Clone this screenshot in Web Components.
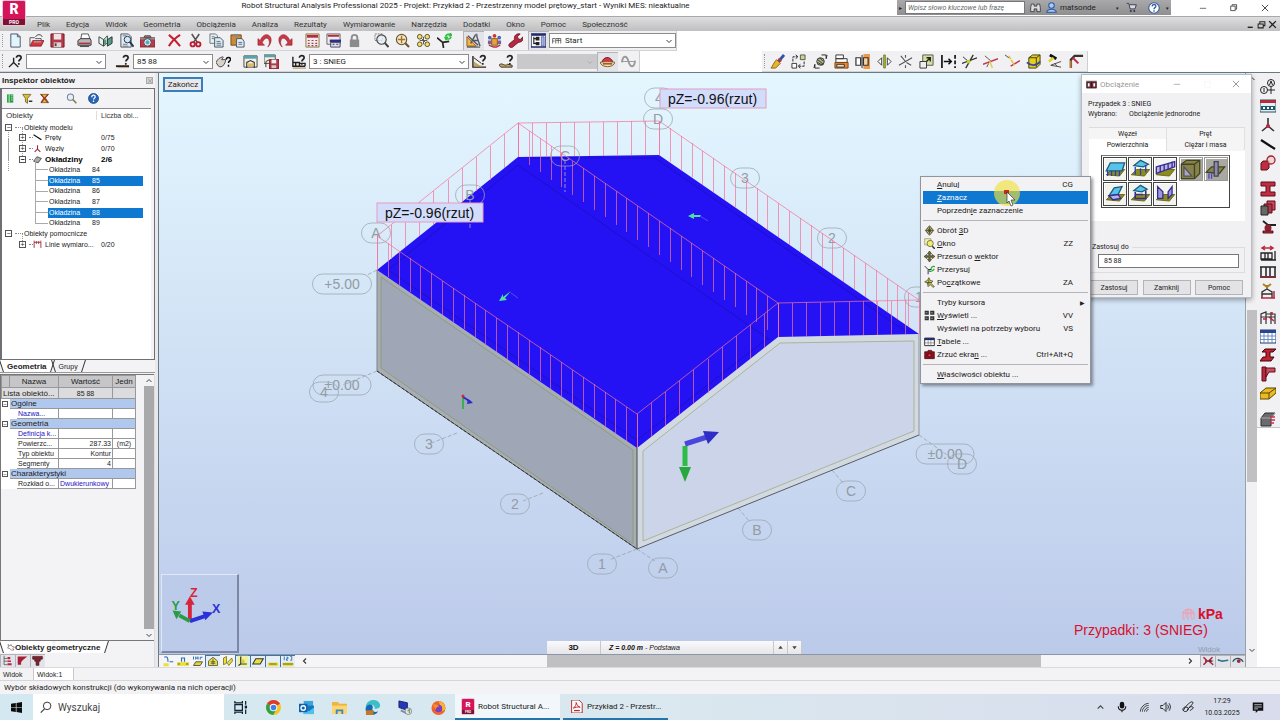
<!DOCTYPE html>
<html lang="pl">
<head>
<meta charset="utf-8">
<title>Robot Structural Analysis Professional 2025</title>
<style>
  html, body { margin: 0; height: 100%; }
  body { font-family: Roboto, "Noto Sans", sans-serif; font-size: 8px; color: #1c1c1c; background: #fff; overflow: hidden; }
</style>
</head>
<body>
<robot-app></robot-app>

<script>
/* ---------- icon set: [label, drawing on a 16 x 16 grid] ---------- */
const q = '<path d="M9 4c0-3 5-3 5 0 0 2-2.400 1.800-2.400 4M11.500 9.500v2" fill="none" stroke="#222" stroke-width="1.800"/>';
const ground = '<path d="M1 12l4-4h10l-4 5z" fill="#8c8c1c" stroke="#55550c" stroke-width=".6"/>';
const ICONS = {
  new: ['Nowy', '<path d="M3 1h7l3 3v11H3z" fill="#e3f4fb" stroke="#456" /><path d="M10 1v3h3" fill="none" stroke="#456"/>'],
  open: ['Otwórz', '<path d="M1 14V5h5l1 1h6v2" fill="#f3f3f3" stroke="#555"/><path d="M1 14l3-6h12l-3 6z" fill="#d8343c" stroke="#7a1520" stroke-width=".7"/><path d="M7 4c2-3 6-3 7 0" fill="none" stroke="#333"/><path d="M5 9.500h8" stroke="#8bd0ee"/>'],
  save: ['Zapisz', '<path d="M1 1h14v14H1z" fill="#b5394a" stroke="#6f1c28"/><path d="M4 1h8v6H4z" fill="#f0e4e6"/><path d="M4 10h8v5H4z" fill="#d8d8d8"/><path d="M5 11h2v3H5z" fill="#444"/>'],
  print: ['Drukuj', '<path d="M5 1h7l2 6H4z" fill="#fff" stroke="#555"/><path d="M1 8l3-2h10l1 2v5H1z" fill="#b6b6ba" stroke="#333"/><path d="M2 11h12" stroke="#c02b3a" stroke-width="1.500"/><path d="M3 13h10v2H3z" fill="#555"/>'],
  book: ['Układ wydruku', '<path d="M1 4l5 3v7l-5-3zM6 7l4-4v7l-4 4z" fill="#e8f2ea" stroke="#344"/><path d="M10 7l5-3v7l-5 3z" fill="#5d9b8c" stroke="#233"/><path d="M7.500 7v5" stroke="#2f7e4a" stroke-width="1.500"/>'],
  preview: ['Podgląd wydruku', '<path d="M2 1h8l3 3v11H2z" fill="#e6edf2" stroke="#456"/><path d="M4 12h5M4 14h6M4 3h4" stroke="#778"/><circle cx="9" cy="7" r="3.500" fill="#cfe9f5" stroke="#234"/><path d="M11.500 9.500l4 5" stroke="#234" stroke-width="2"/>'],
  camera: ['Zrzut ekranu', '<path d="M5 3h6l1 2H4z" fill="#888" stroke="#444"/><path d="M0 5h16v10H0z" fill="#ba3a48" stroke="#701a26" stroke-width=".7"/><path d="M0 5h16v2H0z" fill="#8a8a90"/><circle cx="8" cy="10" r="4" fill="#eee" stroke="#444"/><circle cx="8" cy="10" r="2.200" fill="#56a9c9"/>'],
  del: ['Usuń', '<path d="M2 2c4 3 8 7 12 12M14 2C9 5 5 9 2 14" fill="none" stroke="#c41f30" stroke-width="2.200"/>'],
  cut: ['Wytnij', '<path d="M4 1l6 9M12 1L6 10" stroke="#555" stroke-width="1.700"/><circle cx="5" cy="12" r="2.300" fill="none" stroke="#b81d33" stroke-width="2"/><circle cx="11" cy="12" r="2.300" fill="none" stroke="#b81d33" stroke-width="2"/>'],
  copy: ['Kopiuj', '<path d="M1 1h6l2 2v8H1z" fill="#e8eef2" stroke="#677"/><path d="M6 5h6l3 3v7H6z" fill="#dcebf2" stroke="#456"/><path d="M8 9h4M8 11h5M8 13h5M3 4h3M3 6h3" stroke="#567" stroke-width=".9"/>'],
  paste: ['Wklej', '<path d="M1 2h11v11H1z" fill="#c98a3c" stroke="#7a4c14"/><path d="M4 1h5v3H4z" fill="#888"/><path d="M7 6h6l2 3v6H7z" fill="#e4eef4" stroke="#456"/><path d="M9 10h4M9 12h4" stroke="#567"/>'],
  undo: ['Cofnij', '<path d="M1 6v7h7l-2.500-2.500C7 6 11 4 12.500 7s.5 6-1 8C16 11 16.500 3.500 11.500 2 8 1 5 4 3.500 8z" fill="#c93a48" stroke="#8c1524" stroke-width=".6"/>'],
  redo: ['Ponów', '<path d="M15 6v7H8l2.500-2.500C9 6 5 4 3.500 7s-.5 6 1 8C0 11-.5 3.500 4.500 2 8 1 11 4 12.500 8z" fill="#c93a48" stroke="#8c1524" stroke-width=".6"/>'],
  calc: ['Obliczenia', '<path d="M1 1h14v14H1z" fill="#f2e9ea" stroke="#874"/><path d="M2 2h12v3H2z" fill="#b52c3d"/><path d="M3 8h2M7 8h2M11 8h2M3 11h2M7 11h2M11 11h2M3 13.500h2M7 13.500h2M11 13.500h2" stroke="#a04450" stroke-width="1.300"/>'],
  calc2: ['Parametry obliczeń', '<path d="M1 1h14v11H1z" fill="#f2e9ea" stroke="#666"/><path d="M2 2h12v2H2z" fill="#b52c3d"/><path d="M4 7h12v3H4z" fill="#2b2c8c"/><path d="M5 10h10v5H5z" fill="#dedeee" stroke="#446"/><path d="M7 12h2M11 12h2" stroke="#333"/>'],
  lock: ['Blokada wyników', '<path d="M5 8V5c0-4 6-4 6 0v3" fill="none" stroke="#8c8c8c" stroke-width="2"/><path d="M3 7h10v8H3z" fill="#8b8b8d"/>'],
  zoomwin: ['Powiększ okno', '<path d="M1 1h8v7H1z" fill="none" stroke="#777" stroke-dasharray="2 1"/><circle cx="8" cy="7" r="5" fill="#e6eef3" fill-opacity=".8" stroke="#444" stroke-width="1.200"/><path d="M11.500 10.500l4 4.500" stroke="#444" stroke-width="2.200"/>'],
  zoomall: ['Powiększ wszystko', '<circle cx="7" cy="7" r="5.500" fill="#f5e9c8" stroke="#6b5634" stroke-width="1.200"/><path d="M7 3v8M3 7h8" stroke="#a0752c" stroke-width="1.500"/><path d="M11 11l4 4" stroke="#6b5634" stroke-width="2.200"/>'],
  views: ['Widoki', '<g fill="#f1dc7a" stroke="#5a4c1c"><circle cx="4" cy="4" r="2.500"/><circle cx="12" cy="4" r="2.500"/><circle cx="4" cy="12" r="2.500"/><circle cx="12" cy="12" r="2.500"/></g><path d="M8 4v8M4 8h8M6 6l4 4" stroke="#554" stroke-width="1"/>'],
  redraw: ['Przerysuj', '<path d="M0 5l6 5 1 6M6 10l7-1" fill="none" stroke="#222" stroke-width="1.800"/><path d="M9 4c1-3 4-3 6-2M15 4c-1 3-4 3-6 1M14 0l1.500 2.500-3 .5M10 7.500L8.800 5l3-.5" fill="none" stroke="#2fc040" stroke-width="1.800"/>'],
  geom: ['Geometria', '<path d="M1 14V4l10 10z" fill="#f0b645" stroke="#8f5f10"/><path d="M10 2L5 11M11 2l4 12M7 8h6M2 3l11 10" fill="none" stroke="#556" stroke-width="1.500"/><circle cx="11" cy="2" r="1.600" fill="#778"/><path d="M1 15h14" stroke="#333"/>'],
  people: ['Zespół', '<circle cx="8" cy="3" r="2" fill="#c33"/><circle cx="3" cy="5" r="2" fill="#496ab4"/><circle cx="13" cy="5" r="2" fill="#496ab4"/><path d="M1 8h4v4H1zM11 8h4v4h-4z" fill="#7e5ca8"/><path d="M5 6h6v7H5z" fill="#e9a23b" stroke="#8b5a18"/><path d="M2 13l5 2h3l4-2" fill="none" stroke="#b03048" stroke-width="1.500"/>'],
  wrench: ['Preferencje', '<path d="M2 15c-2-1-1-3 0-4l5-4C6 3 9 0 13 1L10 4l1 2 2 1 3-3c1 4-2 6-5 6l-6 5c-1 1-2 1-3 0z" fill="#b8283e" stroke="#5d0f1e" stroke-width=".8"/>'],
  tree: ['Inspektor', '<path d="M0 1h16v14H0z" fill="#fff" stroke="#232a6a" stroke-width="1.500"/><path d="M1 1h14v2H1z" fill="#232a6a"/><path d="M3 4v8M3 6h3M3 11h3" stroke="#222" stroke-width="1.200"/><path d="M5 4h4v4H5zM5 9.500h4v3.500H5z" fill="#232323"/><path d="M11 4h3v10h-3z" fill="#a8b6e4" stroke="#3a4690" stroke-width=".7"/>'],
  nodeq: ['Wybór węzłów', '<path d="M6 4v5L1 14M6 9l5 5" fill="none" stroke="#222" stroke-width="1.500"/>' + q],
  barq: ['Wybór prętów', '<path d="M1 13h14" stroke="#222" stroke-width="2"/><path d="M3 14.500h12" stroke="#c7a770"/>' + q],
  handq: ['Wybór obiektów', '<path d="M0 9c2-4 4-5 7-6 1 0 1 1 0 1.500L6 6l4 0c1 1-1 5-3 7-2 1-4 1-5-1z" fill="#d9d2c8" stroke="#444"/><path d="M11 6c0-3 4.500-3 4.500 0 0 1.500-2.200 1.300-2.200 3.500M13.300 11.500v2" fill="none" stroke="#111" stroke-width="1.600"/>'],
  win: ['Okno', '<path d="M1 2h14v12H1z" fill="#f5f0e0" stroke="#444"/><path d="M1 2h14v3H1z" fill="#53a3b0"/><path d="M4 15V9l4-2 4 2v6" fill="none" stroke="#333" stroke-width="1.200"/><path d="M5 10h6v3H5z" fill="#e4bb5a"/>'],
  winsave: ['Zapisz okno', '<path d="M0 1h12v9H0z" fill="#f5f0e0" stroke="#444"/><path d="M0 1h12v2.500H0z" fill="#53a3b0"/><path d="M2 14v-6l4-2" fill="none" stroke="#333"/><path d="M6 6h10v10H6z" fill="#b5394a" stroke="#6f1c28"/><path d="M8 6h5v4H8z" fill="#eee"/><path d="M8 12h5v3H8z" fill="#ccc"/>'],
  caseq: ['Wybór przypadku', '<path d="M2 3v10h13M2 9h7v4M5 9v4M9 10h6v3" fill="none" stroke="#222" stroke-width="1.500"/><path d="M2 15h14" stroke="#b08040"/>' + q],
  modeq: ['Postać', '<path d="M2 4l8 6" stroke="#222"/><path d="M1 2v12h14" fill="none" stroke="#222" stroke-width="1.500"/><path d="M2 13V8l6 4 6 1z" fill="#c7a357"/>' + q],
  shapeq: ['Kształt', '<path d="M0 12c3-4 6 2 9-1l5 1v2H2z" fill="#caa75e" stroke="#333"/>' + q],
  hill: ['Mapy', '<path d="M2 9c1-6 9-8 12 0z" fill="#d33445" stroke="#7d1521"/><path d="M0 9c2 6 14 6 16 0-3-1-13-1-16 0z" fill="#f1e9a0" stroke="#6d6320"/><path d="M3 10.500h10" stroke="#b52c3d" stroke-width="1.500"/>'],
  sine: ['Wykresy', '<path d="M1 8h14" stroke="#999"/><path d="M1 9C2 1 6 1 8 8s6 7 7-1" fill="none" stroke="#999" stroke-width="2"/>'],
  brush: ['Formatowanie', '<path d="M15 1l-6 7" stroke="#2b56a8" stroke-width="3"/><path d="M7 6l4 4-5 5H1c2-2 3-6 6-9z" fill="#e8b62c" stroke="#8c5f10"/><path d="M9 5l3 3" stroke="#bf3344" stroke-width="2"/>'],
  move: ['Przesuń', '<path d="M10 1h5v5h-5z" fill="#c8d48a" stroke="#555"/><path d="M1 10h5v5H1z" fill="#fff" stroke="#333"/><path d="M2 8V3h5M14 8v5H8M5 1l2.500 2L5 5M10 11l-2.500 2 2.500 2" fill="none" stroke="#222" stroke-dasharray="3 1"/>'],
  rotate: ['Obróć', '<circle cx="8" cy="8" r="4" fill="#b1b98a" stroke="#333"/><path d="M5 6l6 5M5 9l5 3M7 4l4 4" stroke="#333"/><path d="M9 1h5v4M15 1l-1 4M7 15H2v-4M1 15l1-4" fill="none" stroke="#222"/>'],
  mirror: ['Lustro', '<path d="M2 1h8v4H2zM2 5h12v4H2z" fill="#fff" stroke="#333"/><path d="M1 9h14v6H1z" fill="#e58a35" stroke="#7a4313"/><path d="M3 11h8v3H3z" fill="#f7d9b0" stroke="#333"/>'],
  symv: ['Symetria pionowa', '<path d="M9 0h7v16H9z" fill="#ee9a4c"/><path d="M1 4h5v8H1z" fill="#fff" stroke="#333" stroke-width="1.300"/><path d="M9 4h5v8H9z" fill="#f7d2a0" stroke="#333" stroke-width="1.300"/><path d="M7.500 1v14" stroke="#222"/>'],
  symp: ['Symetria płaszczyzny', '<path d="M5 4v8L1 8zM11 4v8l4-4z" fill="#fff" stroke="#333"/><path d="M7 1h2v14H7z" fill="#9eb51f" stroke="#55630c" stroke-width=".6"/>'],
  axis: ['Symetria osiowa', '<path d="M1 12L15 4M3 2l5 6M9 9l5 3M8 1v3M8 12v3" stroke="#555" stroke-width="1.200"/>'],
  scale: ['Skaluj', '<path d="M4 1h11v11H4z" fill="#d4dfa0" stroke="#555"/><path d="M1 8h7v7H1z" fill="#eee" stroke="#333"/><path d="M8 8l4-4M8 4h4v4" stroke="#222" fill="none" stroke-width="1.500"/>'],
  divide: ['Podział', '<path d="M1 1v14" stroke="#111" stroke-width="1.800"/><path d="M15 1v14" stroke="#111" stroke-width="1.800" stroke-dasharray="4 2"/><path d="M3 8h8M8 5l3 3-3 3" fill="none" stroke="#111" stroke-width="1.600"/>'],
  inter: ['Przecięcie', '<path d="M0 10l16-6M4 15l8-14" stroke="#333" stroke-width="1.400"/><path d="M1 3l6 5" stroke="#333"/><circle cx="7" cy="8" r="2" fill="#c3d427"/>'],
  trim: ['Przytnij', '<path d="M0 11l16-6" stroke="#c4374a" stroke-width="1.600"/><path d="M7 7l3 8" stroke="#e0cc50" stroke-width="1.500"/><path d="M2 2l6 5" stroke="#555"/><path d="M4 14l2-4" stroke="#555"/>'],
  extend: ['Wydłuż', '<path d="M6 13l10-6" stroke="#c4374a" stroke-width="1.600"/><path d="M4 2l6 10" stroke="#dcc932" stroke-width="1.600" stroke-dasharray="4 1"/><path d="M0 1l4 3" stroke="#444"/>'],
  cube: ['Bryła', '<path d="M3 4l4-3h8v10l-4 4H3z" fill="#e3cf21" stroke="#413b0a"/><path d="M3 4h8v10M11 4l4-3" fill="none" stroke="#413b0a"/><path d="M1 9c4 4 10 4 14-1" fill="none" stroke="#3c45a0" stroke-width="2"/>'],
  pen: ['Edycja', '<path d="M3 1l7 4" stroke="#111" stroke-width="3"/><path d="M2 8l5-4" stroke="#e0d32a" stroke-width="2.500"/><path d="M4 12l11-4M4 12l11 2M8 10l3 3" stroke="#444" fill="none"/>'],
  corner: ['Naroże', '<path d="M2 15V6l4-4h9" fill="none" stroke="#333" stroke-width="2.500"/><path d="M2 15V7" stroke="#e08a30" stroke-width="1.500"/><path d="M4 4l6 6" stroke="#c4263a" stroke-width="2"/>'],
  axes: ['Osie konstrukcji', '<circle cx="11" cy="4" r="3.500" fill="none" stroke="#222"/><path d="M9.500 6L11 2l1.500 4M11 8v7M8 11h7" fill="none" stroke="#222"/><circle cx="4" cy="11" r="3.500" fill="none" stroke="#222"/><path d="M4 9v4" stroke="#222"/>'],
  levels: ['Kondygnacje', '<path d="M0 2h16v12H0z" fill="#dff3f4" stroke="#255"/><path d="M0 2h16v3H0z" fill="#b8283e"/><path d="M1 8h14v4H1z" fill="#24536c"/><path d="M3 10h2M7 10h2M11 10h2" stroke="#fff" stroke-width="2"/>'],
  node: ['Węzły', '<path d="M8 1v8L2 14M8 9l6 5" fill="none" stroke="#333" stroke-width="1.600"/><circle cx="8" cy="9" r="2" fill="#b8283e"/>'],
  bar: ['Pręty', '<path d="M1 4l14 9" stroke="#111" stroke-width="2.200"/>'],
  solid: ['Bryły', '<path d="M1 8l2-2h6v7l-2 2H1z" fill="#c02c40" stroke="#5c0f1c"/><circle cx="11" cy="5" r="4" fill="#ecc" fill-opacity=".7" stroke="#a3202f" stroke-width="1.300"/>'],
  section: ['Profile', '<path d="M1 1h14v4h-5v6h5v4H1v-4h5V5H1z" fill="#c02c40" stroke="#5c0f1c"/>'],
  panel: ['Grubości', '<path d="M7 1h8v9H7z" fill="#d14558" stroke="#5c0f1c"/><path d="M4 4h8v9H4z" fill="#b23647" stroke="#5c0f1c"/><path d="M1 6h7v9H1z" fill="#686868" stroke="#222"/>'],
  support: ['Podpory', '<path d="M3 2l5 4h8" fill="none" stroke="#222" stroke-width="1.800"/><circle cx="8" cy="9" r="3.500" fill="#8c2232"/><path d="M3 12h10v2H3z" fill="#c02c40" stroke="#5c0f1c"/>'],
  cases: ['Przypadki obciążeń', '<path d="M3 3h9M5 1L2 3l3 2M10 1l3 2-3 2" fill="none" stroke="#b8283e" stroke-width="1.500"/><path d="M1 8h11v6H1zM5 8v6M8 8v6M1 15h15M15 6v9" fill="none" stroke="#222" stroke-width="1.300"/>'],
  loads: ['Obciążenia', '<path d="M0 3h16M1 3v9M6 3v9M10 3v9M15 3v9M0 13h16" fill="none" stroke="#222" stroke-width="1.500"/><path d="M0 13h16" stroke="#8a2230" stroke-width="1.500"/>'],
  struct: ['Kombinacje', '<path d="M2 15V9l5-3 5 3v6M2 11h10M7 6V2" fill="none" stroke="#333" stroke-width="1.400"/><path d="M3 1l4 3 4-3" stroke="#b08520" fill="none" stroke-width="2"/><path d="M1 15h14M14 8v7" stroke="#b8283e" stroke-width="1.500"/>'],
  frame: ['Konstrukcje', '<path d="M1 15V5l5-2v12M6 5h9v10M11 3v12M1 8h14" fill="none" stroke="#333" stroke-width="1.200"/><path d="M3 10h4M9 8l5 4M12 3v3" stroke="#b8283e" stroke-width="1.500"/>'],
  table: ['Tabele', '<path d="M0 2h16v13H0z" fill="#fff" stroke="#223a6a"/><path d="M0 2h16v3H0z" fill="#27468e"/><path d="M0 8h16M0 11.500h16M4 5v10M8 5v10M12 5v10" stroke="#5f86c0" stroke-width=".9"/>'],
  steel: ['Wymiarowanie stali', '<path d="M2 5l3-3h11l-3 3h-3v5h4l-3 4H0l3-4h3V5z" fill="#c3212f" stroke="#3c060c"/>'],
  joint: ['Połączenia', '<path d="M2 1h4v14H2z" fill="#b8283e" stroke="#5c0f1c"/><path d="M6 2h9v4H9l-3 5z" fill="#cd5060" stroke="#5c0f1c"/>'],
  timber: ['Wymiarowanie drewna', '<path d="M0 8l6-5h10v5l-7 6H0z" fill="#e9bb22" stroke="#5d4405"/><path d="M0 8h9v6M9 8l7-5" fill="none" stroke="#5d4405"/>'],
  rc: ['Wymiarowanie żelbetu', '<path d="M1 7l4-5h10l-4 5v8H1z" fill="#6b6b6f" stroke="#2c2c2e"/><path d="M1 7h10l4-5" fill="none" stroke="#aaa"/><path d="M10 6h5M10 9h5M10 12h4" stroke="#c33249" stroke-width="1.500"/>'],
  list: ['Lista', '<path d="M3 2h9v12H3z" fill="#1f9e4c"/><path d="M6 2v12M9 4h2M9 7h2M9 10h2" stroke="#eaf6b8" stroke-width="1.300"/>'],
  funnel: ['Filtr', '<path d="M1 2h12l-5 6v7l-3-2V8z" fill="#dcbc39" stroke="#5c4c12"/><path d="M10 12h5" stroke="#222" stroke-width="2"/>'],
  funnel2: ['Usuń filtr', '<path d="M2 2h12L9 7l5 7H3l4-7z" fill="#dcbc39" stroke="#5c4c12"/><path d="M3 2l10 12M13 2L3 14" stroke="#a02624" stroke-width="1.500"/>'],
  lens: ['Szukaj', '<circle cx="6.500" cy="6" r="4.500" fill="#e5eff9" stroke="#77819a" stroke-width="1.500"/><path d="M10 9.500l5 5.500" stroke="#8c7a45" stroke-width="2.300"/>'],
  help: ['Pomoc', '<circle cx="8" cy="8" r="7.300" fill="#2766b8" stroke="#163d78"/><path d="M5.500 6c0-4 5-3.500 5-.5 0 2-2.500 2-2.500 4M8 11v2" fill="none" stroke="#fff" stroke-width="1.800"/>'],
  ld1: ['Obciążenie jednorodne', ground + '<path d="M1 9l3-6h11l-2 6z" fill="#55c4e8" stroke="#1d5a80"/><path d="M2 9v4M5 9v4M8 9v4M11 9v4" stroke="#2a3bb0"/>'],
  ld2: ['Obciążenie powierzchniowe', ground + '<path d="M3 5l5-4 6 3-4 2z" fill="#59c6ea" stroke="#1d5a80"/><path d="M4 6v6M8 7v5M12 5v5" stroke="#2a3bb0"/>'],
  ld3: ['Obciążenie liniowe', ground + '<path d="M1 6l14-4v4L1 11z" fill="#b9b2e8" stroke="#342c90"/><path d="M4 5v5M7 4v5M10 3v5M13 2v5" stroke="#342c90"/>'],
  ld4: ['Ciśnienie hydrostatyczne', '<path d="M1 4l4-3h10v10l-4 4H1z" fill="#86824e" stroke="#46441c"/><path d="M1 4h10v11M11 4l4-3" fill="none" stroke="#46441c"/><path d="M3 6v7h6z" fill="#aaa4c8" stroke="#555"/>'],
  ld5: ['Obciążenie skupione', '<path d="M1 10l4-4h10l-4 5z" fill="#86824e" stroke="#46441c"/><path d="M7 2h3v11H7z" fill="#8f8ca8" stroke="#44435c"/><path d="M3 11v4M5 11v4" stroke="#44c"/>'],
  ld6: ['Obciążenie konturowe', ground + '<path d="M3 9l4-6 6-1-3 6z" fill="#55c4e8" stroke="#1d5a80"/><path d="M3 9l3 3 6-1-2-3z" fill="#b9b2e8" stroke="#342c90"/>'],
  ld7: ['Obciążenie trójpunktowe', ground + '<path d="M3 5l5-4 5 3-4 2z" fill="#59c6ea" stroke="#1d5a80"/><path d="M4 6v5h8V5M4 8h6" fill="none" stroke="#342c90" stroke-width="1.200"/>'],
  ld8: ['Obciążenie krawędzi', ground + '<path d="M2 2l4 4v5H2zM10 6l3-4v6l-3 3z" fill="#9f97e0" stroke="#342c90"/>'],
  s1: ['Numery węzłów', '<path d="M2 13h7" stroke="#e9e040" stroke-width="4"/><path d="M3 3c4-2 5 1 5 6M10 9h5" fill="none" stroke="#2a6db0" stroke-width="1.500"/>'],
  s2: ['Numery prętów', '<path d="M0 12h16" stroke="#e9e040" stroke-width="5"/><path d="M6 9V4h4v5" fill="none" stroke="#2a6db0" stroke-width="1.500"/><path d="M1 12h3M12 12h3" stroke="#333"/>'],
  s3: ['Numery paneli', '<path d="M2 14l3-5h9l-3 5z" fill="#e0d43c" stroke="#333"/><path d="M2 2v4M5 2v4M5 4h3M8 2v4M11 6V3h3" fill="none" stroke="#2a6db0" stroke-width="1.300"/>'],
  s4: ['Podpory', '<path d="M8 3l6 5v6H2V8z" fill="#e9e040" stroke="#444"/><path d="M5 9h6M5 11h6M8 5v8" stroke="#444"/>'],
  s5: ['Profile', '<path d="M2 4l4-2v9l-4 2zM7 10l6-6 1 4-5 6z" fill="#e9e040" stroke="#6b6415"/>'],
  s6: ['Układy lokalne', '<path d="M1 1h14v14H1z" fill="#eef2a0"/><path d="M5 2v10h8M5 12l-3 2" fill="none" stroke="#333" stroke-width="1.600"/><path d="M6 6h4v5H6z" fill="#d8cc3a"/>'],
  s7: ['Panele', '<path d="M1 12l4-7h10l-4 7z" fill="#e9e040" stroke="#333" stroke-width="1.400"/>'],
  s8: ['Pręty', '<path d="M1 10h14v5H1z" fill="#e9e040"/><path d="M3 12h10" stroke="#333"/>'],
  s9: ['Wartości', '<path d="M1 10h14v5H1z" fill="#e9e040"/><path d="M3 2v5M6 3h2v2H6v2h2M11 2h2v5h-2" fill="none" stroke="#2a6db0" stroke-width="1.200"/><path d="M1 12h14" stroke="#333"/>'],
  v1: ['Atrybuty', '<path d="M2 3l5 5-5 5M14 3L9 8l6 5M4 8h9" fill="none" stroke="#a4263a" stroke-width="2"/><path d="M9 8h6" stroke="#222"/>'],
  v2: ['Przekrój', '<path d="M1 7c3-1 4 2 7 1l7-1" fill="none" stroke="#2f6e8c" stroke-width="2"/>'],
  v3: ['Widok', '<path d="M1 9c3-6 10-6 14 0" fill="#aee" stroke="#345" stroke-width="1.500"/><circle cx="9" cy="8" r="2.500" fill="#a4263a"/>'],
  p1: ['Drzewo', '<path d="M3 1v13h5M3 5h5M3 9h5" fill="none" stroke="#444"/><path d="M8 3h4v3H8zM8 8h5v2H8zM8 12h6v3H8z" fill="#b8283e"/>'],
  p2: ['Połączenie', '<path d="M1 2h14L9 7l-3 3v4H1z" fill="#a81f33"/>'],
  p3: ['Profil', '<path d="M1 2h14v4h-3v3h-2v6H6V9H4V6H1z" fill="#7b2430" stroke="#4a1018"/>'],
  m3d: ['', '<path d="M8 1l6 7-6 7-6-7z" fill="#b9b15a" stroke="#222"/><path d="M8 3v10M3 8h10M5 5l6 6M11 5l-6 6" stroke="#333"/>'],
  mwin: ['', '<path d="M1 1h9v9H1z" fill="#f8f4a0" stroke="#888"/><circle cx="9" cy="8" r="4.500" fill="#f1f066" stroke="#444"/><path d="M12 12l4 4" stroke="#333" stroke-width="2"/>'],
  mpan: ['', '<path d="M8 0l3 4H9v3h3V5l4 3-4 3V9H9v3h2l-3 4-3-4h2V9H4v2L0 8l4-3v2h3V4H5z" fill="#77722a" stroke="#222" stroke-width=".8"/>'],
  mred: ['', '<path d="M1 3l5 5v7M6 8h5" fill="none" stroke="#222" stroke-width="1.300"/><path d="M10 7c1-3 3-4 6-3M7 10c4 2 6 0 8-3" fill="none" stroke="#2aa33c" stroke-width="1.800"/>'],
  mini: ['', '<path d="M7 1l2 4 4 1-3 3 5 5-2 1-4-4-3 3-1-5-4-2 4-2z" fill="#d9ce3d" stroke="#333"/><path d="M7 4v7M4 8h7" stroke="#333"/>'],
  mdisp: ['', '<path d="M1 1h6v6H1zM9 1h6v6H9zM1 9h6v6H1zM9 9h6v6H9z" fill="#333"/><path d="M2 4h3M10 4h3M2 12h3M10 12h3" stroke="#bbb"/>'],
  mtab: ['', '<path d="M1 3h14v11H1z" fill="#fff" stroke="#222" stroke-width="1.300"/><path d="M1 3h14v3H1z" fill="#232a6a"/><path d="M6 6v8M10 6v8M1 10h14" stroke="#555" stroke-width=".8"/>'],
  mcam: ['', '<path d="M1 4h4l1-2h5l1 2h3v10H1z" fill="#8c1220" stroke="#3c060c"/><circle cx="8" cy="9" r="2.500" fill="#e4364a" stroke="#300"/>'],
  tbar: ['', '<path d="M1 3l14 9" stroke="#111" stroke-width="2.200"/>'],
  tnode: ['', '<path d="M8 2v7l-5 5M8 9l5 5" fill="none" stroke="#a22638" stroke-width="2"/>'],
  tclad: ['', '<path d="M1 11l6-8 8 3-6 8z" fill="#aaa" stroke="#333" stroke-width="1.300"/>'],
  tdim: ['', '<path d="M2 14V4h12v10" fill="none" stroke="#a22638" stroke-width="1.600"/><path d="M6 2v5M10 2v5M2 1v3M14 1v3" stroke="#a22638" stroke-width="1.400"/>'],
  case: ['', '<path d="M0 2h16v12H0z" fill="#c8c8cc"/><path d="M1 4h14v9H1z" fill="#7b2430" stroke="#222"/><path d="M4 6v5M12 6v5" stroke="#fff" stroke-width="2.500"/><path d="M8 4v9" stroke="#222" stroke-width="1.500"/>'],
  start: ['', '<path d="M1 12V4h4M1 8h3M6 12V4h8v8M10 4v8M6 7h8" fill="none" stroke="#444" stroke-width="1.200"/>'],
  bino: ['Szukaj', '<path d="M2 3h4v3h4V3h4l1 5v6h-5v-4H6v4H1V8z" fill="#ddd" stroke="#333" stroke-width="1.200"/>'],
  user: ['Konto', '<circle cx="8" cy="5" r="4" fill="#a9cdf2" stroke="#2b56a8" stroke-width="1.500"/><path d="M1 15c1-6 13-6 14 0z" fill="#a9cdf2" stroke="#2b56a8" stroke-width="1.500"/>'],
  cart: ['Sklep', '<path d="M1 2h3l2 8h7l2-6H5" fill="#d7dbe6" stroke="#334" stroke-width="1.300"/><circle cx="7" cy="13" r="1.500" fill="#334"/><circle cx="12" cy="13" r="1.500" fill="#334"/>'],
  qm: ['Pomoc', '<circle cx="8" cy="8" r="7" fill="#fff" stroke="#345e9c" stroke-width="1.500"/><path d="M5.500 6c0-3.500 5-3.500 5-.5 0 2-2.500 2-2.500 4M8 11v2" fill="none" stroke="#345e9c" stroke-width="1.800"/>'],
  min: ['Minimalizuj', '<path d="M3 8.500h10" stroke="#222"/>'],
  max: ['Przywróć', '<path d="M3 5.500h8v8H3zM5.500 5V3h8v8h-2" fill="none" stroke="#222" stroke-width="1.300"/>'],
  box: ['Maksymalizuj', '<path d="M3 3h10v10H3z" fill="none" stroke="#f0f0f0"/>'],
  close: ['Zamknij', '<path d="M3 3l10 10M13 3L3 13" stroke="#222" stroke-width="1.300"/>'],
  closeg: ['Zamknij', '<path d="M3 3l10 10M13 3L3 13" stroke="#777" stroke-width="1.200"/>'],
  ming: ['Minimalizuj', '<path d="M3 8.500h10" stroke="#888"/>'],
  mdimin: ['Minimalizuj dokument', '<path d="M3 13h9" stroke="#222" stroke-width="2.500"/>'],
  mdimax: ['Przywróć dokument', '<path d="M2 7h9v7H2zM5 7V3h9v7h-3" fill="none" stroke="#222" stroke-width="1.800"/>'],
  mdiclose: ['Zamknij dokument', '<path d="M2 2l12 12M14 2L2 14" stroke="#222" stroke-width="2.500"/>'],
  up: ['W górę', '<path d="M3 10l5-5 5 5" fill="none" stroke="#444" stroke-width="2"/>'],
  down: ['W dół', '<path d="M3 6l5 5 5-5" fill="none" stroke="#444" stroke-width="2"/>'],
  left: ['W lewo', '<path d="M10 3L5 8l5 5" fill="none" stroke="#333" stroke-width="2.200"/>'],
  right: ['W prawo', '<path d="M6 3l5 5-5 5" fill="none" stroke="#333" stroke-width="2.200"/>'],
  tup: ['Wyżej', '<path d="M3 11h10L8 4z" fill="#444"/>'],
  tdown: ['Niżej', '<path d="M3 5h10l-5 7z" fill="#444"/>'],
  winlogo: ['Start', '<path d="M0 2.500l7-1v6H0zM8 1.300L16 0v7.500H8zM0 8.500h7v6l-7-1zM8 8.500h8V16l-8-1.300z" fill="#0b0b0c"/>'],
  taskview: ['Widok zadań', '<path d="M2 1v2h8V1M2 15v-2h8v2M2 5h8v6H2z" fill="none" stroke="#123" stroke-width="1.300"/><path d="M13.500 1v4M13.500 10v5" stroke="#123" stroke-width="1.300"/><path d="M12.500 6h2.500v3h-2.500z" fill="#123"/>'],
  chrome: ['Chrome', '<circle cx="8" cy="8" r="8" fill="#f6c324"/><path d="M8 8L1.100 4A8 8 0 0 1 14.900 4z" fill="#dc3a2b"/><path d="M8 8L1.100 4A8 8 0 0 0 7.600 16l3.500-6z" fill="#31a04d"/><circle cx="8" cy="8" r="4" fill="#fff"/><circle cx="8" cy="8" r="3" fill="#3f7fe6"/>'],
  outlook: ['Outlook', '<path d="M5 1h10v6H5z" fill="#39a5dc"/><path d="M5 6h11v9H5z" fill="#1476bd"/><path d="M5 8l5.500 4L16 8v7H5z" fill="#4fc0ef"/><path d="M0 4h9v9H0z" fill="#0f62ab"/><circle cx="4.500" cy="8.500" r="2.400" fill="none" stroke="#fff" stroke-width="1.400"/>'],
  folder: ['Eksplorator plików', '<path d="M0 2h6l2 2h8v11H0z" fill="#eeb63a"/><path d="M0 6h16v9H0z" fill="#fbd672"/><path d="M4 15v-5h8v5h-2v-3H6v3z" fill="#3b88c4"/>'],
  edge: ['Edge', '<path d="M1 9C0 3 5 0 9 0c5 0 8 4 7 7-1 2-4 3-6 2 1-2-1-4-3-4-3 0-5 2-6 4z" fill="#3cc0c8"/><path d="M1 8c2-5 9-4 7 1-1 3 3 5 6 3-2 4-7 5-10 3S0 11 1 8z" fill="#1767b4"/><path d="M1 11h8v5H1z" fill="#c17a2a"/>'],
  remote: ['Pulpit zdalny', '<path d="M1 1l9 2v8l-9-3z" fill="#2438b8" stroke="#18246c"/><path d="M3 11l6 3" stroke="#889" stroke-width="2"/><circle cx="11" cy="12" r="3.500" fill="#e5e8ee" stroke="#888"/><path d="M10 12l2-2v4" fill="none" stroke="#3a8a3a"/>'],
  firefox: ['Firefox', '<circle cx="8" cy="8.500" r="7.500" fill="#f0642a"/><path d="M8 1c4 1 8 4 7 9l-3 2z" fill="#fbb52c"/><circle cx="8" cy="9" r="4" fill="#7b3fc4"/><path d="M2 5c2-1 5 0 7 2-3 0-4 2-4 4" fill="#f98c2c"/>'],
  pdf: ['PDF', '<path d="M2 0h9l4 4v12H2z" fill="#fff" stroke="#b52a2a" stroke-width="1.200"/><path d="M4 10c3-2 4-5 3.500-7C9 7 10 8 12.500 9 9 8 7 9 4 10z" fill="none" stroke="#c8202c" stroke-width="1.200"/><path d="M5 13h7" stroke="#b52a2a" stroke-width="1.600"/>'],
  mic: ['Mikrofon', '<rect x="5" y="1" width="6" height="9" rx="3" fill="#111"/><path d="M3 7c0 7 10 7 10 0M8 12v3" fill="none" stroke="#111" stroke-width="1.400"/>'],
  net: ['Sieć', '<path d="M2 14C2 8 8 2 14 2M5 14c0-5 4-9 9-9M8 14c0-3 3-6 6-6M11 14c0-2 1-3 3-3" fill="none" stroke="#222" stroke-width="1.200"/>'],
  vol: ['Głośność', '<path d="M1 6h3l4-4v12l-4-4H1z" fill="none" stroke="#222" stroke-width="1.200"/><path d="M10 5c1.500 2 1.500 4 0 6M12 3c2.500 3 2.500 7 0 10" fill="none" stroke="#222" stroke-width="1.200"/>'],
  penw: ['Pióro', '<path d="M2 13c-2-2 0-5 3-5s4 2 3 4-5 3-6 1C3 8 10 2 13 1c2 0 2 2 0 4L7 12M9 9c2-2 6-2 6 0s-4 2-4 4" fill="none" stroke="#222" stroke-width="1.300"/>'],
  note: ['Powiadomienia', '<path d="M1 2h14v11H8l-3 3v-3H1z" fill="#111"/><path d="M3 5h10M3 8h10M3 10.500h5" stroke="#dde" stroke-width="1.100"/>'],
  search: ['', '<circle cx="9.500" cy="6.500" r="5" fill="none" stroke="#333" stroke-width="1.300"/><path d="M6 10.500l-5 5" stroke="#333" stroke-width="1.500"/>'],
  hand: ['', '<path d="M2 3l4 3 2-3 2 4 5 1-3 3 2 3-5 0-4-3-4-1 2-2z" fill="#fff" stroke="#333"/>']
};
const svg = (name, size = 14) =>
  `<svg width="${size}" height="${size}" viewBox="0 0 16 16" aria-hidden="true">${ICONS[name][1]}</svg>`;
const iconButton = (name, size, extra = '') =>
  `<button type="button" aria-label="${ICONS[name][0]}"${extra}>${svg(name, size)}</button>`;
const BASE = `<style>
  * { box-sizing: border-box; }
  svg { display: block; flex: none; }
  button { font: inherit; color: inherit; padding: 0; margin: 0; border: 0; background: none; display: flex; align-items: center; justify-content: center; flex: none; }
  select, input { font: inherit; color: inherit; margin: 0; }
</style>`;
/* Sheet tabs with slanted sides, shared by the two left panels */
const TAB_STYLE = `
  .sheet { position: relative; z-index: 0; height: 12px; padding: 0 6px; font-size: 8px; }
  .sheet::before, .sheet::after { content: ""; position: absolute; top: 0; bottom: 0; z-index: -1; }
  .sheet::before { left: 0; right: 50%; border-left: 1px solid #333; transform: skewX(18deg); }
  .sheet::after { left: 50%; right: 0; border-right: 1px solid #333; transform: skewX(-18deg); }
  .sel { font-weight: 700; } .sel::before, .sel::after { background: #fff; }`;
const define = (tag, render) => customElements.define(tag, class extends HTMLElement {
  constructor() { super(); this.attachShadow({ mode: 'open' }); }
  connectedCallback() { this.shadowRoot.innerHTML = BASE + render(this); }
});

/* Row or column of icon buttons: "|" is a group gap, "*" marks a pressed button */
define('tool-strip', el => {
  const size = +(el.getAttribute('size') || 15);
  const items = el.getAttribute('items').split(' ').map(t => {
    if (t === '|') return '<i></i>';
    const on = t.endsWith('*');
    return iconButton(on ? t.slice(0, -1) : t, size, on ? ' aria-pressed="true"' : '');
  }).join('');
  return `<style>
    :host { display: flex; align-items: center; }
    button { width: var(--cell, 21px); height: var(--cell-h, 19px); }
    button[aria-pressed] { background: var(--on, #e2e4ea); box-shadow: inset 1px 1px var(--on-edge, #b4b4b8); }
    i { flex: none; width: var(--gap, 6px); height: var(--gap, 6px); }
    :host([vertical]) { flex-direction: column; }
    :host([spread]) { justify-content: space-between; }
  </style>${items}`;
});

define('combo-box', el => {
  const off = el.hasAttribute('disabled');
  const icon = el.getAttribute('icon');
  return `<style>
    :host { display: flex; align-items: center; height: 15px; border: 1px solid #8c8c8e; background: #fff; position: relative; }
    :host([disabled]) { background: #c9c9cb; border-color: #c9c9cb; }
    select { appearance: none; border: 0; outline: 0; background: none; flex: 1; min-width: 0; height: 13px; padding: 0 12px 0 3px; }
    .chev { position: absolute; right: 2px; top: 3px; opacity: ${off ? .2 : 1}; }
    .lead { margin-left: 2px; }
  </style>${icon ? `<span class="lead">${svg(icon, 10)}</span>` : ''}
  <select aria-label="${el.getAttribute('label')}"${off ? ' disabled' : ''}><option>${el.getAttribute('value') || ''}</option></select>
  <span class="chev">${svg('down', 8)}</span>`;
});

define('app-logo', () => `<style>
    :host { display: flex; flex-direction: column; width: 22px; height: 24px; color: #fff; font-weight: 700; text-align: center; border-radius: 1px; overflow: hidden; background: #d6145a; box-shadow: 0 0 0 1px #e9c4d2; }
    :host([small]) { width: 12px; height: 15px; }
    b { flex: 1; font-size: 14px; line-height: 17px; }
    small { font-size: 5px; line-height: 6px; background: #7c1136; }
    :host([small]) b { font-size: 8px; line-height: 11px; }
    :host([small]) small { font-size: 3px; line-height: 4px; }
  </style><b>R</b><small>PRO</small>`);

define('title-bar', () => `<style>
    :host { display: flex; height: 16px; background: #fff; padding-left: 34px; align-items: stretch; }
    h1 { flex: 1; margin: 0; font-size: 8px; font-weight: 400; line-height: 12px; text-align: center; white-space: nowrap; }
    .info { display: flex; align-items: center; width: 274px; height: 15px; background: linear-gradient(#a9a9ab, #8f8f92); gap: 5px; }
    .info input { width: 120px; height: 13px; border: 1px solid #777; background: #fff; font-size: 7px; font-style: italic; padding: 0 2px; }
    .info input::placeholder { color: #666; opacity: 1; }
    .arrow { width: 6px; margin-right: -3px; font-size: 6px; color: #222; text-align: center; }
    .name { flex: 1; margin-left: -2px; color: #222; }
    .dd { font-size: 5px; } .dd:last-child { margin: 0 2px 0 1px; }
    .info [aria-label=Sklep] { margin: 0 6px 0 2px; }
    .win { display: flex; margin-left: 16px; }
    .win button { width: 31px; height: 15px; }
  </style>
  <h1>Robot Structural Analysis Professional 2025 - Projekt: Przykład 2 - Przestrzenny model prętowy_start - Wyniki MES: nieaktualne</h1>
  <div class="info"><span class="arrow">▸</span><input aria-label="Wyszukiwanie" placeholder="Wpisz słowo kluczowe lub frazę">
    ${iconButton('bino', 11)}${iconButton('user', 11)}<span class="name">matsonde</span><span class="dd">▾</span>${iconButton('cart', 11)}${iconButton('qm', 12)}<span class="dd">▾</span></div>
  <div class="win">${iconButton('min', 10)}${iconButton('max', 9)}${iconButton('close', 10)}</div>`);

define('menu-bar', () => `<style>
    :host { display: flex; align-items: center; height: 15px; background: linear-gradient(#dededf, #bfbfc1); border-top: 1px solid #a9a9ab; padding-left: 29px; color: #333; }
    nav { display: flex; flex: 1; }
    nav button { padding: 0 8px; line-height: 13px; }
    .doc { display: flex; gap: 2px; padding-right: 3px; }
  </style><nav>${['Plik', 'Edycja', 'Widok', 'Geometria', 'Obciążenia', 'Analiza', 'Rezultaty', 'Wymiarowanie', 'Narzędzia', 'Dodatki', 'Okno', 'Pomoc', 'Społeczność'].map(t => `<button type="button">${t}</button>`).join('')}</nav>
  <div class="doc">${iconButton('mdimin', 9)}${iconButton('mdimax', 9)}${iconButton('mdiclose', 9)}</div>`);

define('main-toolbar', () => `<style>
    :host { display: block; background: #fff; border-bottom: 1px solid #6d7880; }
    .row { display: flex; justify-content: space-between; height: 20px; }
    .row + .row { height: 21px; }
    .bar { display: flex; align-items: center; background: #f1f0f2; border-bottom: 1px solid #d3d3d5; border-right: 1px solid #cfcfd2; padding-left: 5px; position: relative; }
    .bar::before { content: ""; position: absolute; left: 2px; top: 3px; bottom: 3px; border-left: 1px dotted #999; }
    .three { width: 326px; margin-right: 192px; }
    .three tool-strip { flex: 1; }
    .tail { margin-left: 2px; }
    .w1 { width: 80px; } .w2 { width: 160px; } .w3 { width: 127px; }
    .gap { margin-left: 6px; }
  </style>
  <div class="row"><div class="bar">
    <tool-strip items="new open save | print book preview camera | del cut copy paste | undo redo | calc calc2 lock | zoomwin zoomall views redraw"></tool-strip>
    <tool-strip class="gap tail2" style="margin-left:8px" items="geom* people wrench"></tool-strip>
    <tool-strip class="tail" items="tree*"></tool-strip>
    <combo-box class="w3" icon="start" value="Start" label="Układ"></combo-box></div></div>
  <div class="row"><div class="bar">
    <tool-strip items="nodeq"></tool-strip><combo-box class="w1" label="Węzły"></combo-box>
    <tool-strip class="gap" items="barq"></tool-strip><combo-box class="w1" value="85 88" label="Obiekty"></combo-box>
    <tool-strip items="handq | win winsave | caseq"></tool-strip><combo-box class="w2" value="3 : SNIEG" label="Przypadek"></combo-box>
    <tool-strip items="modeq | shapeq"></tool-strip><combo-box class="w1" disabled label="Postać"></combo-box>
    <tool-strip items="hill* sine"></tool-strip></div>
   <div class="bar three"><tool-strip spread items="brush move rotate mirror symv symp axis scale divide inter trim extend cube pen corner"></tool-strip></div></div>`);

define('object-inspector', () => {
  const toggle = s => `<span class="tg">${s}</span>`;
  const child = (n, on) => `<li class="leaf${on ? ' on' : ''}"><span><em>Okładzina</em>${n}</span></li>`;
  const branch = (s, ic, t, n, b = '') => `<li class="branch ${b}">${toggle(s)}<i></i>${svg(ic, 9)}<span>${t}</span><b>${n}</b></li>`;
  return `<style>${TAB_STYLE}
    :host { display: flex; flex-direction: column; font-family: "Liberation Sans", Arial, sans-serif; }
    header { display: flex; justify-content: space-between; align-items: center; height: 15px; padding: 0 2px; }
    h2 { margin: 0; font-size: 8px; }
    .x { width: 7px; height: 7px; background: #d0d0d2; border: 1px solid #aaa; }
    .frame { height: 272px; border: 2px solid #6f6f74; border-width: 1px 1px 1px 2px; display: flex; flex-direction: column; padding-right: 3px; }
    .tools { height: 20px; --cell: 17px; --gap: 5px; border-bottom: 1px solid #8a8a8c; }
    .list { flex: 1; background: #fff; }
    .head { display: flex; height: 13px; align-items: center; padding-left: 4px; font-size: 8px; color: #333; }
    .head span:first-child { width: 91px; border-right: 1px solid #ddd; }
    .head span:last-child { padding-left: 4px; font-size: 7px; }
    ul { list-style: none; margin: 0; padding: 0 8px 0 0; display: grid; grid-auto-rows: 1fr; height: 128px; font-size: 7px; color: #222; }
    li { display: flex; align-items: center; white-space: nowrap; position: relative; }
    .tg { width: 7px; height: 7px; border: 1px solid #555; background: #fff; font-size: 7px; line-height: 5px; text-align: center; flex: none; position: relative; z-index: 1; }
    .root { padding-left: 3px; gap: 3px; }
    .root::before { content: ""; order: 1; width: 8px; border-top: 1px dotted #888; margin-right: -2px; }
    .root span:last-child { order: 2; }
    .branch { padding-left: 17px; gap: 3px; }
    .branch::before, .branch::after { content: ""; position: absolute; border-left: 1px dotted #999; top: -5px; bottom: 5px; left: 20px; }
    .branch::after, .leaf::after { left: 6px; bottom: -6px; }
    li:last-child::after { display: none; }
    .branch i { width: 4px; border-top: 1px dotted #888; margin-right: -3px; }
    .branch span:nth-of-type(2) { width: 53px; overflow: hidden; }
    .branch b { font-weight: 400; }
    .strong { font-weight: 700; font-size: 8px; color: #000; } .strong b { font-weight: 700; }
    .leaf { padding-left: 33px; }
    .leaf::before { content: ""; width: 13px; border-top: 1px solid #aaa; flex: none; }
    .leaf::after { content: ""; position: absolute; left: 33px; top: -6px; bottom: 5px; border-left: 1px solid #aaa; }
    .leaf span { flex: 1; line-height: 10px; padding-left: 1px; }
    .leaf em { font-style: normal; display: inline-block; width: 43px; }
    .on span { background: #0f78d0; color: #fff; }
    .tabs { display: flex; height: 13px; align-items: flex-start; border-bottom: 1px solid #999; padding-left: 1px; }
    .tabs .other { font-size: 7px; }
  </style>
  <header><h2>Inspektor obiektów</h2><button type="button" class="x" aria-label="Zamknij">${svg('closeg', 6)}</button></header>
  <div class="frame"><tool-strip class="tools" size="11" items="list funnel funnel2 | | lens | help"></tool-strip>
    <div class="list"><div class="head"><span>Obiekty</span><span>Liczba obi...</span></div>
    <ul><li class="root">${toggle('−')}<span>Obiekty modelu</span></li>
      ${branch('+', 'tbar', 'Pręty', '0/75')}${branch('+', 'tnode', 'Węzły', '0/70')}${branch('−', 'tclad', 'Okładziny', '2/6', 'strong')}
      ${child(84)}${child(85, 1)}${child(86)}${child(87)}${child(88, 1)}${child(89)}
      <li class="root">${toggle('−')}<span>Obiekty pomocnicze</span></li>${branch('+', 'tdim', 'Linie wymiaro...', '0/20')}</ul></div></div>
  <div class="tabs"><button type="button" class="sheet sel">Geometria</button><button type="button" class="sheet other">Grupy</button></div>`;
});

define('property-grid', () => {
  const group = t => `<tr class="grp"><td><span>−</span></td><td colspan="4">${t}</td></tr>`;
  const row = (n, v = '', u = '', c = '') => `<tr class="${c}"><td class="pad" colspan="2"></td><td>${n}</td><td class="v">${v}</td><td class="u">${u}</td></tr>`;
  return `<style>${TAB_STYLE}
    :host { display: flex; flex-direction: column; font-family: "Liberation Sans", Arial, sans-serif; border-right: 1px solid #ddd; }
    .body { display: flex; flex: 1; justify-content: space-between; border-top: 1px solid #777; border-left: 1px solid #777; min-height: 0; }
    table { border-collapse: collapse; table-layout: fixed; width: 134px; font-size: 7px; align-self: flex-start; }
    td, th { border: 1px solid #98989a; padding: 0 1px; height: 10px; line-height: 9px; font-weight: 400; white-space: nowrap; overflow: hidden; background: #fff; text-align: left; }
    th { height: 12px; font-size: 8px; text-align: center; background: #c6c6c9; }
    .sum td { height: 11px; background: #dcdcde; font-size: 8px; }
    .sum .v { text-align: center; font-size: 7px; }
    .grp td { background: #b0c8ee; font-size: 8px; border-color: #98989a; }
    .grp td:first-child { background: #fff; border-color: #fff; padding: 0; }
    .grp span { display: block; width: 6px; height: 6px; border: 1px solid #555; font-size: 6px; line-height: 4px; text-align: center; }
    .pad { border-color: #fff; }
    .v { text-align: right; } .u { text-align: center; }
    .link td { color: #2412c4; }
    .sb { display: flex; flex-direction: column; align-items: center; width: 11px; }
    .sb button { height: 11px; } .sb i { flex: 1; width: 10px; background: #a9a9ab; }
    .tab { display: flex; align-items: flex-start; height: 13px; border-top: 1px solid #777; padding-left: 1px; }
    .tools { --cell: 15px; --cell-h: 13px; height: 14px; }
  </style>
  <div class="body"><table><colgroup><col style="width:8px"><col style="width:7px"><col style="width:42px"><col style="width:54px"><col style="width:23px"></colgroup>
    <thead><tr><th></th><th colspan="2">Nazwa</th><th>Wartość</th><th>Jedn</th></tr></thead>
    <tbody><tr class="sum"><td colspan="3">Lista obiektó...</td><td class="v">85 88</td><td></td></tr>
    ${group('Ogólne')}${row('Nazwa...', '', '', 'link')}${group('Geometria')}${row('Definicja k...', '', '', 'link')}
    ${row('Powierzc...', '287.33', '(m2)')}${row('Typ obiektu', 'Kontur')}${row('Segmenty', '4')}${group('Charakterystyki')}
    <tr><td class="pad" colspan="2"></td><td>Rozkład o...</td><td style="color:#2412c4">Dwukierunkowy</td><td></td></tr></tbody></table>
    <div class="sb">${iconButton('up', 8)}<i></i>${iconButton('down', 8)}</div></div>
  <div class="tab"><button type="button" class="sheet sel">${svg('hand', 8)}Obiekty geometryczne</button></div>
  <tool-strip class="tools" size="11" items="p1* p2* p3*"></tool-strip>`;
});

/* The 3D scene: building, snow load on both roof planes, axis labels */
define('model-view', () => {
  const H = 34;
  const line = (a, b, n) => {
    let s = '';
    for (let i = 0; i <= n; i++) {
      const x = Math.round(a[0] + (b[0] - a[0]) * i / n) + .5, y = Math.round(a[1] + (b[1] - a[1]) * i / n);
      s += `M${x} ${y - H}V${y}`;
    }
    return s + `M${a[0]} ${a[1] - H}L${b[0]} ${b[1] - H}`;
  };
  const W = [377, 270], R1 = [518, 157], N = [659, 155], E = [919, 334], R2 = [778, 337], S = [637, 448];
  const load = line(W, R1, 10) + line(W, S, 24) + line(R1, R2, 24) + line(R1, N, 10) + line(N, E, 24) + line(R2, E, 10) + line(S, R2, 10);
  const pill = (t, x, y, w = 29) => `<rect x="${x - w / 2}" y="${y - 10}" width="${w}" height="20" rx="10" fill="none" stroke="#9aa5ad" stroke-opacity=".75"/><text x="${x}" y="${y + 5}" text-anchor="middle">${t}</text>`;
  const tag = (x, y) => `<rect x="${x}" y="${y}" width="106" height="19" fill="#d2dcfb" stroke="#e59ac0"/><text x="${x + 8}" y="${y + 15}" fill="#111">pZ=-0.96(rzut)</text>`;
  return `<style>
    :host { display: block; position: relative; overflow: hidden; background: linear-gradient(#e4f7ff, #bccaea); border-left: 1px solid #6d7880; font-family: "Liberation Sans", Arial, sans-serif; }
    .scene { position: absolute; inset: 0; width: 100%; height: 100%; }
    .done { position: absolute; left: 4px; top: 4px; width: 40px; height: 15px; border: 2px solid #3a7dbd; background: #e9e9ec; font: 8px Roboto, sans-serif; color: #222; }
    .cube { position: absolute; left: 2px; bottom: 1px; width: 78px; height: 79px; background: #bccbe9; border: 1px solid #dfe8f6; border-right: 2px solid #7b87a5; border-bottom: 2px solid #7b87a5; }
    .level { position: absolute; left: 388px; bottom: 0; display: flex; height: 13px; width: 255px; background: linear-gradient(#fafafc, #e6e6ea); font: italic 7px "Liberation Sans", sans-serif; color: #111; }
    .level button { border-right: 1px solid #c9c9cc; }
    .level .a { width: 54px; font-weight: 700; font-style: normal; font-size: 8px; } .level .b { flex: 1; justify-content: flex-start; padding-left: 8px; white-space: pre; }
    .level .c { width: 14px; }
  </style>
  <svg class="scene" aria-label="Model 3D">
  <g transform="translate(-159,-73)" font-size="14" fill="#929ca3">
    <g stroke="#9aa5ad" stroke-dasharray="4 2" opacity=".8"><path d="M377 371l-34 14M457 433l-28 11M543 493l-20 8M637 549l-28 11M637 549l18 12M738 508l12 14M832 470l12 14M919 435l35 25M377 270l-10 5"/></g>
    <path d="M377 270L637 448V549L377 371z" fill="#a8adb2"/><path d="M381 277L633 450V544L381 368z" fill="#9fa6b5" stroke="#8e9c80"/>
    <path d="M637 448L778 337L919 334V435L637 549z" fill="#d3d9e0"/><path d="M643 451L780 343L914 341V431L643 541z" fill="#ccd4ea" stroke="#a9b49c"/>
    <path d="M377 371L637 549L919 435" fill="none" stroke="#555c66"/><path d="M377 371L637 549" stroke="#333" stroke-dasharray="3 2"/>
    <path d="M637 448V549" stroke="#444a52"/><path d="M377 270V371" stroke="#7d838c"/><path d="M919 334V435" stroke="#8d95a3"/>
    <path d="M377 270L518 157L659 155L919 334L778 337L637 448z" fill="#2412f5"/>
    <path d="M388 270L518 165L770 340M388 270L637 440L768 338M530 158L655 158L905 331" fill="none" stroke="#1a10b0" stroke-opacity=".7"/>
    <path d="M565 160V192M470 200V230" stroke="#8a8fe0" stroke-dasharray="4 2"/>
    ${pill('4', 659, 98)}${pill('D', 658, 119)}${pill('C', 565, 156)}${pill('B', 470, 195)}${pill('A', 376, 233)}${pill('3', 745, 178)}${pill('2', 832, 238)}${pill('1', 919, 297)}
    ${pill('+5.00', 342, 284, 59)}${pill('±0.00', 342, 385, 58)}${pill('4', 324, 392)}${pill('3', 429, 444)}${pill('2', 515, 504)}${pill('1', 602, 564)}${pill('A', 663, 568)}${pill('B', 757, 530)}${pill('C', 851, 491)}${pill('±0.00', 945, 454, 58)}${pill('D', 962, 464)}
    <path d="${load}" fill="none" stroke="#f4709a" stroke-opacity=".7"/>
    ${tag(377, 203)}${tag(660, 89)}
    <path d="M511 291l-8 6v-3l-4 7 8-1-2-2z" fill="#4fe0a0"/><path d="M511 293l7 5" stroke="#4a50ff"/>
    <path d="M701 215h-7v-2l-6 3 6 3v-2h6z" fill="#4fe0a0"/><path d="M700 216l8 5" stroke="#4a50ff"/>
    <path d="M463 397v12" stroke="#3fae50" stroke-width="2"/><path d="M463 397l8 5" stroke="#2a2ad0" stroke-width="2"/><path d="M468 399l5 4-6 1z" fill="#2a2ad0"/><circle cx="463" cy="396" r="1.500" fill="#e02030"/>
    <path d="M685 446v20" stroke="#2ebc48" stroke-width="5"/><path d="M679 467h12l-6 15z" fill="#27a83f"/>
    <path d="M685 444l22-7" stroke="#4a46dc" stroke-width="5"/><path d="M703 431l16 1-11 12z" fill="#302cc8"/>
    <g stroke="#f49aa4" fill="none"><path d="M1183 619v-7q5-6 11 0v7M1183 613h11M1186 609v9M1188 609v9M1191 609v9M1184 618v2M1188 618v2M1192 618v2"/></g>
    <text x="1198" y="619" fill="#d8102c" font-weight="700">kPa</text>
    <text x="1074" y="635" fill="#d8102c">Przypadki: 3 (SNIEG)</text>
    <text x="1198" y="652" font-size="8">Widok</text>
  </g></svg>
  <button type="button" class="done">Zakończ</button>
  <svg class="cube" viewBox="0 0 78 79" font-size="13" font-weight="700">
    <path d="M29 48V28" stroke="#d8243a" stroke-width="4"/><path d="M24 31h10l-5-9z" fill="#d8243a"/><path d="M29 48l15-5" stroke="#2b31d8" stroke-width="4"/><path d="M42 38l11 1-8 8z" fill="#2b31d8"/>
    <path d="M29 48l-11-6" stroke="#2a9c48" stroke-width="4"/><path d="M20 38l-9-1 4 9z" fill="#2a9c48"/>
    <text x="29" y="23" fill="#d8243a">Z</text><text x="10" y="36" fill="#2a9c48">Y</text><text x="52" y="39" fill="#2b31d8">X</text></svg>
  <div class="level"><button type="button" class="a">3D</button><button type="button" class="b"><b>Z = 0.00 m</b> - Podstawa</button>${iconButton('tup', 7, ' class="c"')}${iconButton('tdown', 7, ' class="c"')}</div>`;
});

define('view-footer', () => `<style>
    :host { display: flex; height: 13px; align-items: center; background: #f5f5f7; border-top: 1px solid #8b97a6; border-left: 1px solid #6d7880; padding-left: 1px; }
    .a { --cell: 15px; --cell-h: 12px; --on: #e6eef6; --on-edge: #3f74a8; } .b { --cell: 15px; --cell-h: 12px; }
    .arr { width: 20px; height: 12px; }
    .track { flex: 1; align-self: stretch; padding-left: 232px; }
    .track i { display: block; width: 78%; max-width: 497px; height: 100%; background: #c0c0c2; }
  </style><tool-strip class="a" size="12" items="s1 s2 s3 s4* s5 s6* s7* s8* s9*"></tool-strip>
  <button type="button" class="arr" aria-label="W lewo">${svg('left', 8)}</button><div class="track"><i></i></div>
  <button type="button" class="arr" aria-label="W prawo">${svg('right', 8)}</button><tool-strip class="b" size="12" items="v1* v2* v3*"></tool-strip>`);

define('v-scroll', () => `<style>
    :host { display: flex; flex-direction: column; align-items: center; width: 12px; background: #f1f0f2; border-left: 1px solid #98a0ac; padding-bottom: 12px; box-sizing: border-box; }
    button { width: 11px; height: 11px; } .track { flex: 1; padding-top: 226px; } i { display: block; width: 10px; height: 172px; background: #c0c0c2; }
  </style>${iconButton('up', 8)}<div class="track"><i></i></div>${iconButton('down', 8)}`);

define('load-dialog', () => {
  const grid = ['ld1', 'ld2', 'ld3', 'ld4', 'ld5', 'ld6', 'ld7', 'ld8'].map(n => iconButton(n, 21, /[45]$/.test(n) ? ' class="off" disabled' : '')).join('');
  return `<style>
    :host { display: block; width: 171px; background: #f1f0f2; border: 1px solid #b8bcc4; box-shadow: 0 2px 5px #0005; font-size: 7px; color: #222; }
    header { display: flex; align-items: center; height: 18px; background: #fff; color: #999; font-size: 8px; padding: 0 7px 0 4px; }
    header span { flex: 1; padding-left: 3px; } header button { width: 30px; } header button:last-child { width: 16px; margin-left: 6px; }
    .info { padding: 6px 6px 0; } p { margin: 0; line-height: 10px; display: flex; gap: 12px; }
    .tabs { display: grid; grid-template-columns: 1fr 1fr; margin: 8px 6px 0 7px; background: #f5f5f6; border-top: 1px solid #ddd; }
    .tabs button { height: 11px; border-right: 1px solid #e0e0e0; } .tabs .sel { background: #fff; height: 12px; }
    .page { background: #fff; margin: 0 6px 0 7px; padding: 4px 12px 13px; }
    .grid { display: grid; grid-template-columns: repeat(5, 1fr); width: 129px; height: 53px; gap: 1px; border: 1px solid #444; border-top-color: #777; padding: 1px; }
    .grid button { height: 24px; width: 24px; background: #f4f4ee; border: 1px solid #444; box-shadow: inset 1px 1px #fff; }
    .grid .off { background: #a9a9a2; border-color: #999; }
    fieldset { margin: 21px 6px 0 6px; border: 1px solid #dcdcdf; border-left: 0; padding: 2px 5px 4px 10px; }
    legend { padding: 0 3px; margin-left: -9px; line-height: 10px; }
    fieldset input { display: block; width: 100%; height: 14px; border: 1px solid #777; padding: 0 5px; background: #fff; }
    footer { display: flex; justify-content: space-between; padding: 7px 8px 2px; }
    footer button { width: 48px; height: 15px; border: 1px solid #b4b4b8; background: #e3e3e6; }
  </style>
  <header>${svg('case', 11)}<span>Obciążenie</span>${iconButton('ming', 10)}${iconButton('box', 9)}${iconButton('closeg', 10)}</header>
  <div class="info"><p>Przypadek 3 : SNIEG</p><p><span>Wybrano:</span><span>Obciążenie jednorodne</span></p></div>
  <div class="tabs"><button type="button">Węzeł</button><button type="button">Pręt</button><button type="button" class="sel">Powierzchnia</button><button type="button">Ciężar i masa</button></div>
  <div class="page"><div class="grid">${grid}</div></div>
  <fieldset><legend><label for="to">Zastosuj do</label></legend><input id="to" value="85 88"></fieldset>
  <footer><button type="button">Zastosuj</button><button type="button">Zamknij</button><button type="button">Pomoc</button></footer>`;
});

define('context-menu', () => {
  const it = (t, key = '', ic = '', c = '') => `<button type="button" role="menuitem" class="${c}"><i>${ic ? svg(ic, 11) : ''}</i><span>${t}</span><kbd>${key}</kbd></button>`;
  return `<style>
    :host { display: block; width: 171px; padding: 1px 2px 2px; background: #f2f1f3; border: 1px solid #8f959c; box-shadow: 2px 2px 3px #0006; font-size: 8px; color: #222; box-sizing: border-box; }
    button { width: 100%; height: 13px; justify-content: flex-start; }
    button i { width: 14px; padding-left: 1px; } span { flex: 1; text-align: left; } kbd { font: inherit; padding-right: 15px; }
    .sub kbd { padding-right: 3px; font-size: 6px; }
    .on { background: #0f78d0; color: #fff; }
    hr { margin: 3px 0; height: 1px; border: 0; background: #b4b4b8; }
    .cursor { position: absolute; left: 72px; top: 2px; }
  </style><div role="menu">
  ${it('<u>A</u>nuluj', 'CG')}${it('<u>Z</u>aznacz', '', '', 'on')}${it('Poprzedn<u>i</u>e zaznaczenie')}<hr>
  ${it('Obrót <u>3</u>D', '', 'm3d')}${it('<u>O</u>kno', 'ZZ', 'mwin')}${it('Przesuń o <u>w</u>ektor', '', 'mpan')}${it('Przerysu<u>j</u>', '', 'mred')}${it('Po<u>c</u>zątkowe', 'ZA', 'mini')}<hr>
  ${it('Tryby kursora', '▶', '', 'sub')}${it('<u>W</u>yświetl ...', 'VV', 'mdisp')}${it('Wyświetl na potrzeby wyboru', 'VS')}${it('<u>T</u>abele ...', '', 'mtab')}${it('Zrzuć ekra<u>n</u> ...', 'Ctrl+Alt+Q', 'mcam')}<hr>
  ${it('<u>W</u>łaściwości obiektu ...')}</div>
  <svg class="cursor" width="28" height="28"><circle cx="14" cy="14" r="13" fill="#efe23c" fill-opacity=".65"/><path d="M11 11h5v4h-5z" fill="#c8281e"/><path d="M14 13l8 8h-4l2 5-2 1-2-5-2 2z" fill="#fff" stroke="#333" stroke-width=".7"/></svg>`;
});

define('side-tools', () => `<style>
    :host { display: block; background: #fff; width: 23px; }
    tool-strip { --cell: 22px; --cell-h: 19px; --gap: 7px; background: #f1f0f2; padding: 4px 2px 0 0; height: 355px; border-bottom: 1px solid #c4c4c8; }
  </style><tool-strip vertical size="16" items="axes levels node bar solid | section panel support | cases loads struct | frame table steel joint timber | rc"></tool-strip>`);

define('status-area', () => `<style>
    :host { display: block; background: #f3f2f4; border-top: 1px solid #dadadc; color: #222; }
    .tabs { display: flex; height: 13px; border-bottom: 1px solid #d6d6d9; }
    .tabs button { width: 34px; justify-content: flex-start; padding-left: 3px; border-right: 1px solid #c9c9cc; font: 7px "Liberation Sans", sans-serif; }
    .tabs .sel { width: 40px; background: #fff; }
    p { margin: 0; height: 13px; line-height: 13px; padding-left: 4px; }
  </style><div class="tabs"><button type="button">Widok</button><button type="button" class="sel">Widok:1</button></div>
  <p>Wybór składowych konstrukcji (do wykonywania na nich operacji)</p>`);

define('task-bar', () => `<style>
    :host { display: flex; align-items: stretch; height: 26px; background: linear-gradient(90deg, #d3e8f1, #dae8ef 50%, #d8dcec); color: #222; }
    .start { width: 33px; }
    label { display: flex; align-items: center; gap: 6px; width: 191px; background: #fff; padding-left: 7px; }
    label input { border: 0; outline: 0; width: 120px; font-size: 10px; padding: 0; background: none; } input::placeholder { color: #444; opacity: 1; }
    .pins { --cell: 33px; --cell-h: 26px; }
    .app { width: 105px; gap: 4px; padding-left: 7px; justify-content: flex-start; border-bottom: 2px solid #2474ae; white-space: nowrap; margin-right: 3px; }
    .active { background: #f1f7fa; }
    .tray { display: flex; align-items: center; margin-left: auto; }
    .tray > button { width: 22px; height: 26px; }
    time { font-size: 7px; line-height: 12px; text-align: center; width: 46px; }
    .tray > .n { width: 26px; margin-right: 9px; }
  </style><button type="button" class="start" aria-label="Start">${svg('winlogo', 11)}</button>
  <label>${svg('search', 12)}<input aria-label="Wyszukaj" placeholder="Wyszukaj"></label>
  <tool-strip class="pins" size="15" items="taskview chrome outlook folder edge remote firefox"></tool-strip>
  <button type="button" class="app active"><app-logo small></app-logo>Robot Structural A...</button>
  <button type="button" class="app">${svg('pdf', 13)}Przykład 2 - Przestr...</button>
  <div class="tray">${iconButton('up', 9)}${iconButton('mic', 12)}${iconButton('net', 11)}${iconButton('vol', 12)}${iconButton('penw', 12)}<time datetime="2025-03-10T17:29">17:29<br>10.03.2025</time>${iconButton('note', 12, ' class="n"')}</div>`);

define('robot-app', () => `<style>
    :host { display: flex; flex-direction: column; height: 100vh; position: relative; }
    .logo { position: absolute; left: 3px; top: 1px; }
    .work { flex: 1; display: flex; min-height: 0; }
    aside { width: 155px; flex: none; background: #f3f2f4; border-right: 3px solid #e9e9eb; box-sizing: content-box; display: flex; flex-direction: column; }
    property-grid { flex: 1; min-height: 0; margin-top: 1px; }
    .view { flex: 1; min-width: 0; display: flex; flex-direction: column; }
    .view model-view { flex: 1; }
    load-dialog { position: absolute; right: 28px; top: 74px; }
    context-menu { position: absolute; left: 920px; top: 176px; }
  </style>
  <title-bar></title-bar><menu-bar></menu-bar><app-logo class="logo"></app-logo>
  <main-toolbar></main-toolbar>
  <div class="work"><aside><object-inspector></object-inspector><property-grid></property-grid></aside>
    <div class="view"><model-view></model-view><view-footer></view-footer></div><v-scroll></v-scroll><side-tools></side-tools></div>
  <status-area></status-area><task-bar></task-bar>
  <load-dialog></load-dialog><context-menu></context-menu>`);
</script>
</body>
</html>
